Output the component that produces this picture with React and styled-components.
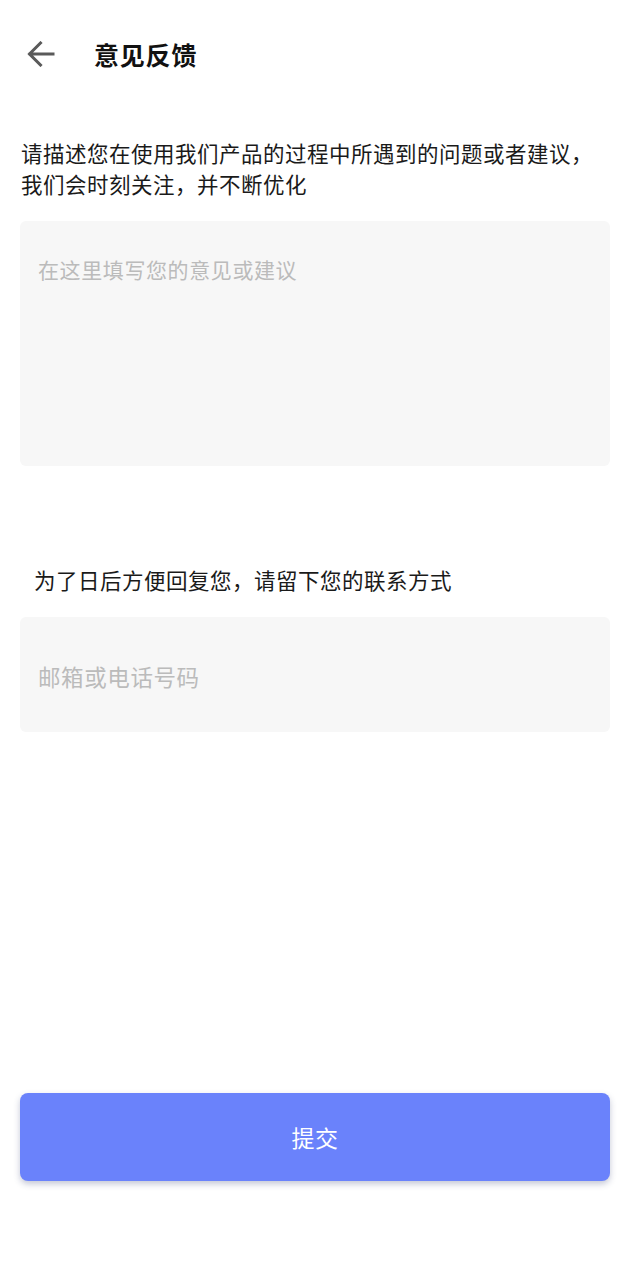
import styled, { createGlobalStyle } from "styled-components";

const GlobalStyle = createGlobalStyle`
  body {
    margin: 0;
    background: #ffffff;
    font-family: "Noto Sans CJK SC", "Noto Sans", sans-serif;
  }
`;

const Page = styled.div`
  width: 630px;
  height: 1280px;
  display: flex;
  flex-direction: column;
  background: #ffffff;
`;

const Header = styled.div`
  height: 108px;
  display: flex;
  align-items: center;
  padding-left: 26px;
  box-sizing: border-box;
`;

const BackButton = styled.button`
  width: 30px;
  height: 30px;
  padding: 0;
  border: none;
  background: none;
  display: flex;
  align-items: center;
  justify-content: center;
  margin-right: 38px;
`;

const Title = styled.h1`
  margin: 0;
  font-size: 25px;
  font-weight: 700;
  color: #111111;
  letter-spacing: 0.8px;
`;

const Content = styled.div`
  flex: 1;
  display: flex;
  flex-direction: column;
  padding: 29px 20px 0;
`;

const Label = styled.p`
  margin: 0 0 ${(p) => p.$gap}px;
  padding-left: ${(p) => p.$indent}px;
  font-size: 21.5px;
  line-height: 31px;
  letter-spacing: 0.5px;
  color: #1a1a1a;
`;

const Field = styled.div`
  height: ${(p) => p.$height}px;
  background: #f7f7f7;
  border-radius: 6px;
  box-sizing: border-box;
  padding: ${(p) => p.$pad}px 18px 0;
  margin-bottom: ${(p) => p.$after}px;
`;

const Placeholder = styled.span`
  font-size: ${(p) => p.$size}px;
  letter-spacing: 0.6px;
  color: #bbbbbb;
`;

const Spacer = styled.div`
  flex: 1;
`;

const SubmitButton = styled.button`
  height: 88px;
  margin: 0 20px 99px;
  border: none;
  border-radius: 8px;
  background: #6a82fb;
  color: #ffffff;
  font-family: "Noto Sans CJK SC", sans-serif;
  font-size: 23px;
  letter-spacing: 0.5px;
  box-shadow: 0 3px 6px rgba(60, 70, 120, 0.3);
`;

function ArrowLeft() {
  return (
    <svg width="28" height="26" viewBox="0 0 28 26" fill="none">
      <path
        d="M26 13H3M13.5 2L2.5 13l11 11"
        stroke="#5a5a5a"
        strokeWidth="3"
        strokeLinecap="square"
      />
    </svg>
  );
}

export default function App() {
  return (
    <>
      <GlobalStyle />
      <Page>
        <Header>
          <BackButton>
            <ArrowLeft />
          </BackButton>
          <Title>意见反馈</Title>
        </Header>
        <Content>
          <Label $gap={22} $indent={1}>
            请描述您在使用我们产品的过程中所遇到的问题或者建议，
            <br />
            我们会时刻关注，并不断优化
          </Label>
          <Field $height={245} $pad={33} $after={98}>
            <Placeholder $size={21}>在这里填写您的意见或建议</Placeholder>
          </Field>
          <Label $gap={22} $indent={14}>
            为了日后方便回复您，请留下您的联系方式
          </Label>
          <Field $height={115} $pad={43} $after={0}>
            <Placeholder $size={22.5}>邮箱或电话号码</Placeholder>
          </Field>
          <Spacer />
        </Content>
        <SubmitButton>提交</SubmitButton>
      </Page>
    </>
  );
}
